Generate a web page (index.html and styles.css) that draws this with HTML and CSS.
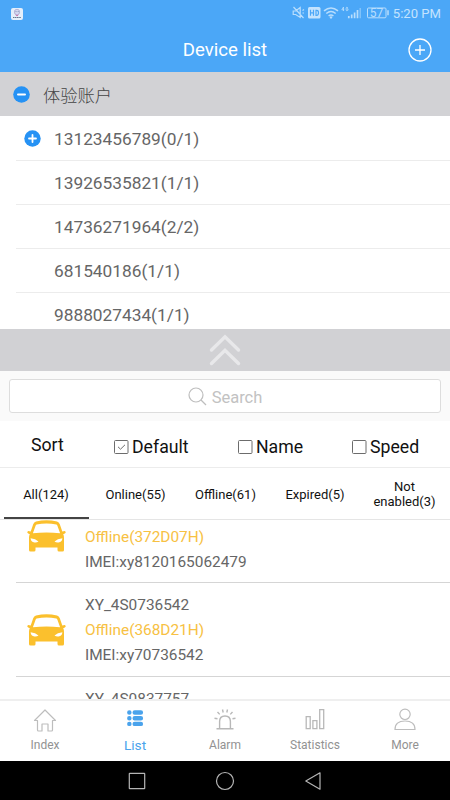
FILE: index.html
```html
<!DOCTYPE html>
<html lang="en">
<head>
<meta charset="utf-8">
<title>Device list</title>
<link rel="stylesheet" href="styles.css">
</head>
<body>
<div class="app">
  <div class="status">
    <svg class="app-badge" width="12" height="12" viewBox="0 0 12 12"><rect width="12" height="12" rx="2" fill="#e4effb"/><circle cx="6" cy="4" r="2.7" fill="#d6d9f2" stroke="#a8a3cc" stroke-width=".7"/><path d="M4.500 3.600h1M6.700 3.600h1" stroke="#6980a5" stroke-width=".8"/><path d="M4.600 6.800L6 8l1.400-1.200" stroke="#cc70a8" fill="none"/><path d="M2 9.500h8" stroke="#667790" stroke-dasharray="1.400 .4"/></svg>
    <svg class="status-icons" width="98" height="18" viewBox="0 0 98 18" fill="none" stroke="#b9defd" stroke-width="1.200">
      <path d="M1.200 7h2.500l4.500-3.500v10L3.700 10.500H1.200zM1.500 3l10 11M10.500 6.500l1.500-1M10.500 9h1.500"/>
      <rect x="16" y="3" width="12.500" height="11.500" rx="1.500" fill="#c4e3fe" stroke="none"/>
      <path d="M18.500 5.800v6M21.500 5.800v6M18.500 8.800h3M24 6.300v5h.8q1.700 0 1.700-2.500t-1.700-2.500z" stroke="#4ba7f7"/>
      <path d="M32 6.900q7-5.800 14 0M34.300 9.500q4.700-3.900 9.400 0M36.600 12q2.400-2 4.800 0" stroke-width="1.500"/><circle cx="39" cy="13.400" r="1.200" fill="#b9defd" stroke="none"/>
      <path d="M51.500 3l-1.700 2.800h2.400M51.500 3v4M56 3.800q-2-1.500-2 1.200t2 1.200v-1.400h-1" stroke-width=".8"/>
      <path d="M56.800 12v2.200M59.700 10.500v3.700M62.600 8.500v5.700M65.500 6v8.200" stroke-width="1.700"/><path d="M68.200 4v10.200" stroke="#8bc7fa" stroke-width="1.300"/>
      <rect x="75.500" y="4" width="18.500" height="9.800" rx="1" stroke-width="1"/><path d="M96 6.300v5" stroke-width="1.500"/>
    </svg>
    <span class="battery">57</span>
    <span class="clock">5:20 PM</span>
  </div>
  <header class="header">
    <h1>Device list</h1>
    <svg class="add" width="24" height="24" viewBox="0 0 24 24" fill="none" stroke="#fff" stroke-width="1.300"><circle cx="12" cy="12" r="11"/><path d="M12 7v10M7 12h10"/></svg>
  </header>
  <div class="account">
    <svg width="17" height="17" viewBox="0 0 17 17"><circle cx="8.500" cy="8.500" r="8.300" fill="#2692f4"/><path d="M5 8.500h7" stroke="#fff" stroke-width="2" stroke-linecap="round"/></svg>
    <span>体验账户</span>
  </div>
  <div class="children">
    <div class="child"><svg width="17" height="17" viewBox="0 0 17 17"><circle cx="8.500" cy="8.500" r="8.200" fill="#2692f4"/><path d="M5 8.500h7M8.500 5v7" stroke="#fff" stroke-width="1.800" stroke-linecap="round"/></svg><span>13123456789(0/1)</span></div>
    <div class="child"><span>13926535821(1/1)</span></div>
    <div class="child"><span>14736271964(2/2)</span></div>
    <div class="child"><span>681540186(1/1)</span></div>
    <div class="child"><span>9888027434(1/1)</span></div>
  </div>
  <div class="collapse">
    <svg width="34" height="34" viewBox="0 0 34 34" fill="none" stroke="#e8e8ea" stroke-width="3.400" stroke-linecap="round" stroke-linejoin="miter"><path d="M3.500 17L17 3.800 30.500 17M3.500 30.500L17 17.300l13.500 13.200"/></svg>
  </div>
  <div class="search-area"><div class="search">
    <svg width="19" height="19" viewBox="0 0 19 19" fill="none" stroke="#bebebe" stroke-width="1.200"><circle cx="8" cy="8" r="7"/><path d="M13 13l5 5"/></svg><span>Search</span>
  </div></div>
  <div class="sort">
    <span class="sort-title">Sort</span>
    <span class="option"><svg width="15" height="14" viewBox="0 0 15 14" fill="none" stroke="#6c6c6c"><rect x=".5" y=".5" width="13.500" height="13" rx="1"/><path d="M4 6.800l2.500 2.400L11 4.800"/></svg>Default</span>
    <span class="option"><svg width="15" height="14" viewBox="0 0 15 14" fill="none" stroke="#6c6c6c"><rect x=".5" y=".5" width="13.500" height="13" rx="1"/></svg>Name</span>
    <span class="option"><svg width="15" height="14" viewBox="0 0 15 14" fill="none" stroke="#6c6c6c"><rect x=".5" y=".5" width="13.500" height="13" rx="1"/></svg>Speed</span>
  </div>
  <div class="tabs">
    <span class="tab active">All(124)</span><span class="tab">Online(55)</span><span class="tab">Offline(61)</span><span class="tab">Expired(5)</span><span class="tab">Not<br>enabled(3)</span>
  </div>
  <svg class="symbols" width="0" height="0"><symbol id="car" viewBox="0 0 39 32"><path fill="#fbc02d" fill-rule="evenodd" d="M9 1.600Q19.500-1 30 1.600q2 .5 2.800 2.600l2.500 7.300 2.400-.4q1.200.4.900 1.700-.4 1-2.400 1.400.8 1.300.8 3.800v12q0 1.500-1.500 1.500h-3.500q-1.500 0-1.500-1.500v-2.500h-22V30q0 1.500-1.500 1.500H3.500Q2 31.500 2 30V18q0-2.500.8-3.800Q.8 13.800.4 12.800q-.3-1.300.9-1.700l2.400.4 2.500-7.300Q7 2.100 9 1.600zM9.600 4.400Q8.900 4.700 8.500 6L5.900 13.200q13.600-1.600 27.200 0L30.500 6q-.4-1.300-1.100-1.600-9.900-2-19.800 0zM3.600 18.300q.3 3.500 3 4 3 .6 4.900-.8-3-2.800-7.900-3.200zM35.400 18.300q-.3 3.500-3 4-3 .6-4.900-.8 3-2.800 7.900-3.200z"/></symbol></svg>
  <div class="devices">
    <div class="device first"><svg width="39" height="32"><use href="#car"/></svg><div class="info"><span class="state">Offline(372D07H)</span><span>IMEI:xy8120165062479</span></div></div>
    <div class="device"><svg width="39" height="32"><use href="#car"/></svg><div class="info"><span>XY_4S0736542</span><span class="state">Offline(368D21H)</span><span>IMEI:xy70736542</span></div></div>
    <div class="device last"><div class="info"><span>XY_4S0837757</span></div></div>
  </div>
  <nav class="tabbar">
    <div class="item"><svg width="24" height="24" viewBox="0 0 24 24" fill="none" stroke="#bdbdbd" stroke-width="1.200" stroke-linejoin="round"><path d="M1.500 12.500L12 2l10.500 10.500H19.500V22q0 1-1 1h-3.500v-7H9v7H5.500q-1 0-1-1v-9.500z"/></svg><span>Index</span></div>
    <div class="item current"><svg width="24" height="24" viewBox="0 0 24 24" stroke="#4aa3ec" stroke-linecap="round" stroke-width="4.400"><path d="M6.300 4.500h.1M11.700 4.500h6.200M6.300 10.200h.1M11.700 10.200h6.200M6.300 15.900h.1M11.700 15.900h6.200"/></svg><span>List</span></div>
    <div class="item"><svg width="24" height="24" viewBox="0 0 24 24" fill="none" stroke="#b8b8b8" stroke-width="1.400"><path d="M3.500 20.800h17M6.600 20.800v-7.300q0-5.500 5.400-5.500t5.400 5.500v7.300M1.500 10.200l3 .5M22.500 10.200l-3 .5M4.500 4l2.200 2.400M19.500 4l-2.200 2.400M9.500 1.500l.7 3M14.500 1.500l-.7 3"/></svg><span>Alarm</span></div>
    <div class="item"><svg width="24" height="24" viewBox="0 0 24 24" fill="none" stroke="#b8b8b8" stroke-width="1.300"><path d="M3.200 8.700h4v12h-4zM9.900 12.700h4v8h-4zM16.700 1.600h4v19.100h-4z"/></svg><span>Statistics</span></div>
    <div class="item"><svg width="24" height="24" viewBox="0 0 24 24" fill="none" stroke="#bdbdbd" stroke-width="1.200"><circle cx="12" cy="6.300" r="5.200"/><path d="M2 21.500q0-8.500 10-8.500t10 8.500z"/></svg><span>More</span></div>
  </nav>
  <div class="navbar">
    <svg width="18" height="18" viewBox="0 0 18 18"><rect x="1.300" y="1.300" width="15.400" height="15.400" rx=".5"/></svg>
    <svg width="20" height="20" viewBox="0 0 20 20"><circle cx="10" cy="10" r="8.500"/></svg>
    <svg width="18" height="20" viewBox="0 0 18 20"><path d="M16 1.800v16.400L1.800 10z" stroke-linejoin="round"/></svg>
  </div>
</div>
</body>
</html>
```
FILE: styles.css
```css
* { box-sizing: border-box; }
body { margin: 0; font-family: Roboto, "Noto Sans CJK SC", sans-serif; background: #fff; }
svg { display: block; flex: none; }
.app { width: 450px; height: 800px; overflow: hidden; display: flex; flex-direction: column; }
.app > * { flex: none; }
.status { height: 27px; background: #4ba7f7; display: flex; align-items: center; padding: 0 9px 0 11px; position: relative; }
.app-badge { margin-right: auto; }
.status-icons { margin: -1px 3px 0 0; }
.battery { position: absolute; left: 367px; width: 19px; top: 6px; text-align: center; font-size: 12px; line-height: 15px; color: #b9defd; }
.clock { font-size: 13.1px; line-height: 16px; color: #c4e3fe; white-space: nowrap; }
.header { height: 45px; background: #4ba7f7; display: grid; grid-template-columns: 1fr auto 1fr; align-items: center; padding: 0 18px; }
.header h1 { grid-column: 2; margin: 0; padding-top: 1px; font-size: 18.6px; font-weight: 400; line-height: 24px; color: #fff; }
.add { justify-self: end; }
.account { height: 44px; background: #d2d2d5; display: flex; align-items: center; padding-left: 13px; gap: 13px; font-size: 17.3px; font-weight: 300; color: #444; }
.children { height: 213px; overflow: hidden; padding-top: 1px; }
.child { height: 44px; margin-left: 16px; border-bottom: 1px solid #ececec; display: flex; align-items: center; padding-left: 8px; font-size: 17.3px; color: #666; }
.child span { margin-left: auto; width: 396px; padding-top: 1px; }
.collapse { height: 42px; background: #d1d1d4; display: flex; justify-content: center; align-items: center; }
.search-area { height: 50px; background: #fafafa; padding: 8px 9px; }
.search { height: 34px; border: 1px solid #ddd; border-radius: 3px; background: #fff; display: flex; justify-content: center; align-items: center; gap: 5px; font-size: 16.5px; color: #c2c2c2; }
.search span { padding-top: 2px; }
.sort { height: 47px; border-bottom: 1px solid #ececec; display: grid; grid-template-columns: 83px 124px 114px 98px; padding-left: 31px; align-items: center; font-size: 17.7px; color: #111; }
.sort-title { padding-top: 2px; }
.option { display: flex; align-items: center; gap: 3px; padding-top: 5px; }
.tabs { height: 52px; border-bottom: 1px solid #e5e5e5; display: grid; grid-template-columns: 89px 90px 90px 89px 90px; }
.tab { display: flex; justify-content: center; align-items: center; text-align: center; font-size: 13px; line-height: 15px; color: #111; margin-left: 3px; padding-top: 1px; }
.active { border-bottom: 2px solid #444; margin-left: 4px; padding: 3px 1px 0 0; }
.symbols { position: absolute; }
.devices { height: 179px; overflow: hidden; }
.device { height: 94px; margin-left: 16px; border-bottom: 1px solid #d5d5d5; display: flex; padding: 31px 0 0 11px; gap: 19px; }
.info { display: flex; flex-direction: column; font-size: 15.4px; line-height: 25px; color: #666; margin-top: -21px; }
.first { height: 63px; padding-top: 0; }
.first .info { margin-top: 5px; }
.last { border: 0; padding-left: 69px; }
.info .state { color: #f7c143; }
.tabbar { height: 62px; border-top: 2px solid #efefef; display: grid; grid-template-columns: repeat(5, 90px); background: #fff; }
.item { display: flex; flex-direction: column; align-items: center; padding-top: 7px; font-size: 12px; line-height: 16px; color: #929292; }
.item span { margin-top: 5px; }
.current { color: #4aa3ec; font-size: 13.7px; }
.navbar { height: 39px; background: #000; display: flex; justify-content: center; align-items: center; gap: 69px; }
.navbar svg { fill: none; stroke: #b5b5b5; stroke-width: 1.200; }
```
